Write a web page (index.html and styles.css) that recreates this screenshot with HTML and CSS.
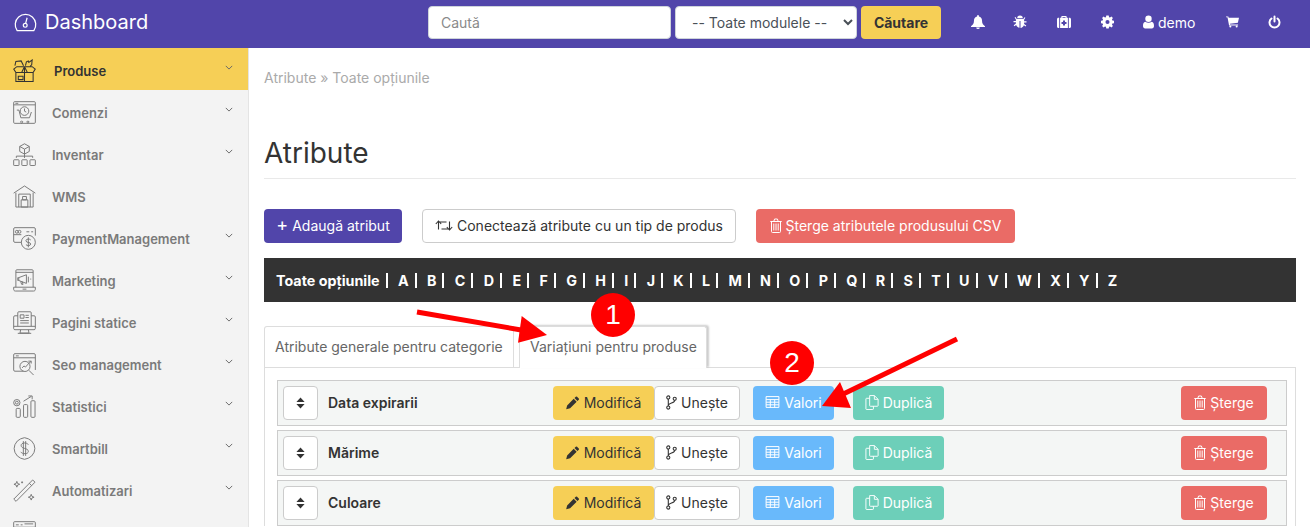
FILE: index.html
```html
<!DOCTYPE html>
<html lang="ro">
<head>
<meta charset="utf-8">
<title>Atribute</title>
<link rel="stylesheet" href="styles.css">
</head>
<body>
<svg class="defs" width="0" height="0" aria-hidden="true">
  <defs>
    <symbol id="chev" viewBox="0 0 10 6"><path d="M1 1l4 4 4-4" fill="none" stroke="currentColor" stroke-width="1.200"/></symbol>
    <symbol id="sort" viewBox="0 0 10 14"><path d="M5 .5L9.800 5.800H.2zM5 13.500L.2 8.200h9.600z" fill="currentColor"/></symbol>
    <symbol id="pencil" viewBox="0 0 16 16"><path d="M11.200 1.400a1 1 0 0 1 1.400 0l2 2a1 1 0 0 1 0 1.400l-1.500 1.500-3.400-3.400zM8.800 3.800l3.400 3.400-7.500 7.500-4.500 1 1.100-4.400z" fill="currentColor"/></symbol>
    <symbol id="fork" viewBox="0 0 12 16"><g fill="none" stroke="currentColor" stroke-width="1.200"><circle cx="2.500" cy="2.500" r="1.700"/><circle cx="2.500" cy="13.500" r="1.700"/><circle cx="9.500" cy="4" r="1.700"/><path d="M2.500 4.200v7.600M9.500 5.700c0 3-7 2.600-7 5.600"/></g></symbol>
    <symbol id="table" viewBox="0 0 14 12"><path d="M.6.6h12.800v10.800H.6zM.6 3.600h12.800M.6 6.200h12.800M.6 8.800h12.800M4.800 3.600v7.800M9.200 3.600v7.800" fill="none" stroke="currentColor" stroke-width="1"/></symbol>
    <symbol id="copy" viewBox="0 0 14 16"><path d="M4.500 3.500H1.200a.7.7 0 0 0-.7.700v10.600c0 .4.300.7.700.7h6.600c.4 0 .7-.3.7-.7V12M4.500.6h5l4 4v6.700c0 .4-.3.7-.7.7H5.200a.7.7 0 0 1-.7-.7zM9.500.6v4h4" fill="none" stroke="currentColor" stroke-width="1"/></symbol>
    <symbol id="trash" viewBox="0 0 12 15"><path d="M1.500 3.500v10a1 1 0 0 0 1 1h7a1 1 0 0 0 1-1v-10M.3 3.500h11.400M3.800 3.300l.8-2.300h2.800l.8 2.300M3.800 5.500v7M6 5.500v7M8.200 5.500v7" fill="none" stroke="currentColor" stroke-width="1"/></symbol>
    <symbol id="retweet" viewBox="0 0 18 12"><path d="M3.500 10V2.500h8M.8 4.500l2.700-3 2.700 3M14.500 2v7.500h-8M17.200 7.500l-2.700 3-2.700-3" fill="none" stroke="currentColor" stroke-width="1.100"/></symbol>
    <symbol id="bell" viewBox="0 0 14 14"><path d="M7 0c.6 0 .9.400.9 1v.5c2 .5 3.100 2 3.100 4 0 3.400 1.500 4.400 3 5.800v.7H0v-.7c1.500-1.400 3-2.400 3-5.800 0-2 1.100-3.500 3.100-4V1c0-.6.300-1 .9-1zM5.200 12.500h3.600A1.800 1.500 0 0 1 7 14a1.800 1.500 0 0 1-1.800-1.500z" fill="currentColor"/></symbol>
    <symbol id="bug" viewBox="0 0 14 14"><path d="M4.200 3.200a2.800 2.800 0 0 1 5.600 0zM3.700 4h6.600l1.200-1.800.9.600-1.300 2v1.500h2.400v1.300h-2.400v1.300l2.200 1.700-.7 1-1.700-1.300c-.5 1.400-1.800 2.500-3.400 2.700V6H6.500v6.700c-1.600-.2-2.900-1.300-3.400-2.700l-1.700 1.300-.7-1 2.200-1.700V7.300H.5V6h2.400V4.500l-1.300-2 .9-.6z" fill="currentColor"/></symbol>
    <symbol id="medkit" viewBox="0 0 14 12"><path fill-rule="evenodd" d="M4.300 1.800V1c0-.6.400-1 1-1h3.400c.6 0 1 .4 1 1v.8h1.200v10.200H3.100V1.800zm1.200 0h3V1h-3zM6 4.500h2V6h1.500v2H8v1.500H6V8H4.500V6H6zM0 3.300c0-.8.600-1.500 1.500-1.500h.7V12h-.7C.6 12 0 11.300 0 10.500zM11.800 1.800h.7c.9 0 1.500.7 1.500 1.500v7.200c0 .8-.6 1.500-1.500 1.500h-.7z" fill="currentColor"/></symbol>
    <symbol id="cog" viewBox="0 0 14 14"><path fill-rule="evenodd" d="M5.700 0h2.600l.4 1.800 1 .4L11.300 1.200l1.500 1.500-1 1.600.4 1 1.800.4v2.600l-1.800.4-.4 1 1 1.600-1.500 1.500-1.600-1-1 .4-.4 1.800H5.700l-.4-1.800-1-.4-1.600 1-1.500-1.500 1-1.600-.4-1L0 8.300V5.700l1.800-.4.4-1-1-1.600 1.500-1.500 1.600 1 1-.4zM7 4.800a2.200 2.200 0 1 0 0 4.400 2.200 2.200 0 0 0 0-4.400z" fill="currentColor"/></symbol>
    <symbol id="user" viewBox="0 0 11 13"><circle cx="5.500" cy="3.200" r="3.200" fill="currentColor"/><path d="M2.300 6.300c.9.700 2 1 3.200 1s2.300-.3 3.200-1c1.500.2 2.300 1.800 2.300 4.300 0 1.500-.9 2.400-2.200 2.400H2.200C.9 13 0 12.100 0 10.600c0-2.500.8-4.100 2.300-4.300z" fill="currentColor"/></symbol>
    <symbol id="cart" viewBox="0 0 14 12"><path d="M0 0h2.500l.4 1.500H14l-1.200 5.300-8.600 1 .2.900h8.600v1H3.300L1.600 1H0z" fill="currentColor"/><circle cx="4.700" cy="10.900" r="1.100" fill="currentColor"/><circle cx="11.500" cy="10.900" r="1.100" fill="currentColor"/></symbol>
    <symbol id="power" viewBox="0 0 13 13"><path d="M3.500 3a5 5 0 1 0 6 0M6.500 1v5" fill="none" stroke="currentColor" stroke-width="2" stroke-linecap="round"/></symbol>
    <symbol id="gauge" viewBox="0 0 24 20"><path d="M3.200 18.500a10.800 10.800 0 1 1 17.600 0zM12 11.500l1.700-6.500" fill="none" stroke="currentColor" stroke-width="1.300" stroke-linejoin="round"/><circle cx="11.700" cy="13" r="2" fill="none" stroke="currentColor" stroke-width="1.300"/></symbol>
    <symbol id="i-box" viewBox="0 0 24 24"><g fill="none" stroke="currentColor" stroke-width="1.100"><path d="M3 14h18v9.500H3zM3 14L.8 10.500 4 8h16l3.200 2.500L21 14M12 8v15.500M12 8l-3 6M12 8l3 6M5.500 18h5v3.500h-5zM2 7l1-4.500 5.500-.5L11 7M13 7l1-4 2-1 .5 1.500 3.500-2.500-.5 5-1.500 1.500"/></g></symbol>
    <symbol id="i-cart" viewBox="0 0 24 24"><g fill="none" stroke="currentColor" stroke-width="1"><rect x=".7" y=".7" width="22.600" height="22.600" rx="1"/><path d="M.7 4h22.600M2.500 2.400h3"/><circle cx="12" cy="10.500" r="4.500"/><path d="M12 7.800v2.800l1.800 1M4 9.500h2.200l2 8h9l2-6M9 21a1 1 0 1 0 .1 0M15.500 21a1 1 0 1 0 .1 0"/></g></symbol>
    <symbol id="i-net" viewBox="0 0 24 24"><g fill="none" stroke="currentColor" stroke-width="1"><path d="M12 .8l5 2.800v5.200l-5 2.800-5-2.800V3.600zM7 3.600l5 2.800 5-2.800M12 6.400v5.200M12 11.600v4M3.500 15.500v-1.800h17v1.800"/><rect x=".7" y="17.500" width="5.600" height="6" rx=".6"/><rect x="9.200" y="17.500" width="5.600" height="6" rx=".6"/><rect x="17.700" y="17.500" width="5.600" height="6" rx=".6"/></g></symbol>
    <symbol id="i-wh" viewBox="0 0 24 24"><g fill="none" stroke="currentColor" stroke-width="1"><path d="M.7 8.500L12 1l11.300 7.500M3 8v15h18V8M6 23V9.500h12V23M8.500 15.500h7V23h-7zM10 12h4v3.500h-4z"/></g></symbol>
    <symbol id="i-pay" viewBox="0 0 24 24"><g fill="none" stroke="currentColor" stroke-width="1"><path d="M9 16H2a1.300 1.300 0 0 1-1.300-1.300V2A1.300 1.300 0 0 1 2 .7h20A1.300 1.300 0 0 1 23.300 2v7M.7 8h8M14 5h3M19 5h2"/><circle cx="4" cy="5" r="1.500"/><circle cx="6.800" cy="5" r="1.500"/><circle cx="16" cy="16" r="7.300"/><path d="M18.500 13.500c-1-1.300-5-1.300-5 .8 0 2.700 5 1 5 3.500 0 2-4 2-5 .6M16 10.800v10.400"/></g></symbol>
    <symbol id="i-mkt" viewBox="0 0 24 24"><g fill="none" stroke="currentColor" stroke-width="1"><path d="M3 19V1.800A1 1 0 0 1 4 .8h16a1 1 0 0 1 1 1V19M3 3.500h18M.7 19h22.600v2.200c0 1-.6 1.800-1.800 1.800h-19c-1.200 0-1.800-.8-1.800-1.800zM10 21h4M6 9l8-3v9l-8-3zM6 9H5v3h1M8 13l1 3h1.500l-1-3M16 8v6M18 10.500h1"/></g></symbol>
    <symbol id="i-page" viewBox="0 0 24 24"><g fill="none" stroke="currentColor" stroke-width="1"><path d="M5 16V1.800A1 1 0 0 1 6 .8h12a1 1 0 0 1 1 1V16M5 5H2a1.300 1.300 0 0 0-1.300 1.300v12A1.300 1.300 0 0 0 2 19.500h20a1.300 1.300 0 0 0 1.300-1.300v-12A1.300 1.300 0 0 0 22 5h-3M.7 16h22.600M8 19.500l-.7 3.500h9.400l-.7-3.500M5 23.300h14M7.500 4h4v3.500h-4zM13 4.500h3.500M13 6.800h3.500M7.500 10h9M7.500 12.500h9"/></g></symbol>
    <symbol id="i-seo" viewBox="0 0 24 24"><g fill="none" stroke="currentColor" stroke-width="1"><path d="M11 19H2a1.300 1.300 0 0 1-1.300-1.300V2A1.300 1.300 0 0 1 2 .7h20A1.300 1.300 0 0 1 23.300 2v15.700M.7 5h22.600M3 3h3"/><circle cx="12.500" cy="14" r="5.300"/><path d="M16.500 18l5 5M9.500 15.500l2-2 1.500 1.200 4.500-5 1.500-1M16 8.500h3v2.500"/></g></symbol>
    <symbol id="i-stat" viewBox="0 0 24 24"><g fill="none" stroke="currentColor" stroke-width="1"><circle cx="4" cy="8" r="3.300"/><circle cx="4" cy="8" r="1.500"/><rect x="3.300" y="14" width="4.300" height="9.300" rx="1"/><rect x="11" y="10" width="4.300" height="13.300" rx="1"/><rect x="18.700" y="6" width="4.300" height="17.300" rx="1"/><path d="M11 6.500L19 1.500M16 1h4v3.500"/></g></symbol>
    <symbol id="i-bill" viewBox="0 0 24 24"><g fill="none" stroke="currentColor" stroke-width="1"><path d="M12 .7l4 1.200 3.500 2.300 2.500 3.800.8 4-.8 4-2.500 3.800-3.500 2.300-4 1.200-4-1.200-3.500-2.300L2 16l-.8-4 .8-4 2.500-3.800L8 1.900z"/><path d="M16 8c-1.300-2.500-7.500-2.500-7.500.8 0 4 7.500 2.300 7.500 6.200 0 3.300-6.500 3-8 .5M10.800 4.300v15.400M13.200 4.300v15.400"/></g></symbol>
    <symbol id="i-wand" viewBox="0 0 24 24"><g fill="none" stroke="currentColor" stroke-width="1"><path d="M.8 21l19.700-20 2.500 2.300L3.200 23.300zM17 4.500l2.500 2.500M4 2.500l.8 2.200 2.200.8-2.200.8L4 8.500l-.8-2.200L1 5.500l2.200-.8zM19 16l.8 2.200 2.200.8-2.200.8L19 22l-.8-2.200-2.200-.8 2.200-.8zM9.500 2.500v2M8.500 3.500h2"/></g></symbol>
    <symbol id="i-last" viewBox="0 0 24 24"><g fill="none" stroke="currentColor" stroke-width="1"><rect x=".7" y=".7" width="22.600" height="22.600" rx="1"/><path d="M3 4h3M8 4h2M12 3h9M.7 6.500h22.600"/></g></symbol>
  </defs>
</svg>

<header class="topbar">
  <a class="brand"><svg class="brand-icon"><use href="#gauge"/></svg>Dashboard</a>
  <form class="search">
    <input class="search-input" type="text" placeholder="Caută">
    <select class="search-select"><option>-- Toate modulele --</option></select>
    <button class="search-btn" type="button">Căutare</button>
  </form>
  <nav class="top-icons">
    <a class="ti ti-bell"><svg class="w14"><use href="#bell"/></svg></a>
    <a class="ti ti-bug"><svg class="w14"><use href="#bug"/></svg></a>
    <a class="ti ti-med"><svg class="w14"><use href="#medkit"/></svg></a>
    <a class="ti ti-cog"><svg class="w13"><use href="#cog"/></svg></a>
    <a class="ti ti-user"><svg class="w11"><use href="#user"/></svg>demo</a>
    <a class="ti ti-cart"><svg class="w13"><use href="#cart"/></svg></a>
    <a class="ti ti-pow"><svg class="w13"><use href="#power"/></svg></a>
  </nav>
</header>

<div class="layout">
  <aside class="sidebar">
    <a class="side-item active"><svg class="side-icon"><use href="#i-box"/></svg><span class="side-label">Produse</span><svg class="chev"><use href="#chev"/></svg></a>
    <a class="side-item"><svg class="side-icon"><use href="#i-cart"/></svg><span class="side-label">Comenzi</span><svg class="chev"><use href="#chev"/></svg></a>
    <a class="side-item"><svg class="side-icon"><use href="#i-net"/></svg><span class="side-label">Inventar</span><svg class="chev"><use href="#chev"/></svg></a>
    <a class="side-item"><svg class="side-icon"><use href="#i-wh"/></svg><span class="side-label">WMS</span></a>
    <a class="side-item"><svg class="side-icon"><use href="#i-pay"/></svg><span class="side-label">PaymentManagement</span><svg class="chev"><use href="#chev"/></svg></a>
    <a class="side-item"><svg class="side-icon"><use href="#i-mkt"/></svg><span class="side-label">Marketing</span><svg class="chev"><use href="#chev"/></svg></a>
    <a class="side-item"><svg class="side-icon"><use href="#i-page"/></svg><span class="side-label">Pagini statice</span><svg class="chev"><use href="#chev"/></svg></a>
    <a class="side-item"><svg class="side-icon"><use href="#i-seo"/></svg><span class="side-label">Seo management</span><svg class="chev"><use href="#chev"/></svg></a>
    <a class="side-item"><svg class="side-icon"><use href="#i-stat"/></svg><span class="side-label">Statistici</span><svg class="chev"><use href="#chev"/></svg></a>
    <a class="side-item"><svg class="side-icon"><use href="#i-bill"/></svg><span class="side-label">Smartbill</span><svg class="chev"><use href="#chev"/></svg></a>
    <a class="side-item"><svg class="side-icon"><use href="#i-wand"/></svg><span class="side-label">Automatizari</span><svg class="chev"><use href="#chev"/></svg></a>
    <a class="side-item"><svg class="side-icon"><use href="#i-last"/></svg></a>
  </aside>

  <main class="content">
    <div class="breadcrumb">Atribute » Toate opțiunile</div>
    <h1 class="title">Atribute</h1>
    <div class="actions">
      <a class="btn btn-primary"><span class="plus">+</span> Adaugă atribut</a>
      <a class="btn btn-outline"><svg class="ic-retweet"><use href="#retweet"/></svg> Conectează atribute cu un tip de produs</a>
      <a class="btn btn-red"><svg class="ic-trash"><use href="#trash"/></svg> Șterge atributele produsului CSV</a>
    </div>
    <div class="alpha">
      <a class="alpha-first">Toate opțiunile</a><a>A</a><a>B</a><a>C</a><a>D</a><a>E</a><a>F</a><a>G</a><a>H</a><a>I</a><a>J</a><a>K</a><a>L</a><a>M</a><a>N</a><a>O</a><a>P</a><a>Q</a><a>R</a><a>S</a><a>T</a><a>U</a><a>V</a><a>W</a><a>X</a><a>Y</a><a class="alpha-last">Z</a>
    </div>
    <div class="tabs">
      <a class="tab">Atribute generale pentru categorie</a>
      <a class="tab tab-active">Variațiuni pentru produse</a>
    </div>
    <section class="panel">
      <div class="row">
        <button class="sort" type="button"><svg class="ic-sort"><use href="#sort"/></svg></button>
        <strong class="row-name">Data expirarii</strong>
        <a class="btn btn-yellow"><svg class="ic"><use href="#pencil"/></svg> Modifică</a>
        <a class="btn btn-white"><svg class="ic-fork"><use href="#fork"/></svg> Unește</a>
        <a class="btn btn-blue"><svg class="ic-table"><use href="#table"/></svg> Valori</a>
        <a class="btn btn-teal"><svg class="ic"><use href="#copy"/></svg> Duplică</a>
        <a class="btn btn-red btn-del"><svg class="ic-trash"><use href="#trash"/></svg> Șterge</a>
      </div>
      <div class="row">
        <button class="sort" type="button"><svg class="ic-sort"><use href="#sort"/></svg></button>
        <strong class="row-name">Mărime</strong>
        <a class="btn btn-yellow"><svg class="ic"><use href="#pencil"/></svg> Modifică</a>
        <a class="btn btn-white"><svg class="ic-fork"><use href="#fork"/></svg> Unește</a>
        <a class="btn btn-blue"><svg class="ic-table"><use href="#table"/></svg> Valori</a>
        <a class="btn btn-teal"><svg class="ic"><use href="#copy"/></svg> Duplică</a>
        <a class="btn btn-red btn-del"><svg class="ic-trash"><use href="#trash"/></svg> Șterge</a>
      </div>
      <div class="row">
        <button class="sort" type="button"><svg class="ic-sort"><use href="#sort"/></svg></button>
        <strong class="row-name">Culoare</strong>
        <a class="btn btn-yellow"><svg class="ic"><use href="#pencil"/></svg> Modifică</a>
        <a class="btn btn-white"><svg class="ic-fork"><use href="#fork"/></svg> Unește</a>
        <a class="btn btn-blue"><svg class="ic-table"><use href="#table"/></svg> Valori</a>
        <a class="btn btn-teal"><svg class="ic"><use href="#copy"/></svg> Duplică</a>
        <a class="btn btn-red btn-del"><svg class="ic-trash"><use href="#trash"/></svg> Șterge</a>
      </div>
    </section>
  </main>
</div>

<svg class="annot" viewBox="0 0 1310 527" aria-hidden="true">
  <path d="M417 312L524 330.500" stroke="#f00" stroke-width="5" fill="none"/>
  <path d="M547 335L521.700 316 518 342.700z" fill="#f00"/>
  <path d="M957 339L835 398" stroke="#f00" stroke-width="5" fill="none"/>
  <path d="M822 406L840 382 851 408z" fill="#f00"/>
</svg>
<div class="badge badge-1">1</div>
<div class="badge badge-2">2</div>
</body>
</html>
```
FILE: styles.css
```css
* { box-sizing: border-box; }
html, body { margin: 0; height: 527px; overflow: hidden; }
body { font-family: Inter, "Liberation Sans", sans-serif; font-size: 14px; color: #333; background: #fff; position: relative; }
.defs { position: absolute; }
a { text-decoration: none; color: inherit; }

.topbar { height: 48px; background: #5145aa; display: flex; align-items: flex-start; color: #fff; }
.brand { width: 428px; height: 44px; display: flex; align-items: center; padding-left: 14px; font-size: 20px; line-height: 1; }
.brand-icon { width: 23px; height: 19px; margin-right: 8px; color: #fff; }
.search { display: flex; gap: 4px; padding-top: 6px; }
.search-input { width: 243px; height: 33px; border: 1px solid #ced4da; border-radius: 4px; padding: 0 12px; font: 14px Inter, sans-serif; background: #fff; }
.search-input::placeholder { color: #8a8a8a; }
.search-select { width: 182px; height: 33px; border: 1px solid #ced4da; border-radius: 4px; padding: 0 12px; font: 14px Inter, sans-serif; font-variant-ligatures: none; color: #495057; background: #fff; }
.search-btn { width: 80px; height: 33px; border: 0; border-radius: 4px; background: #f6cf56; color: #333; font: 700 14px Inter, sans-serif; padding: 0; }
.top-icons { display: flex; align-items: center; height: 44px; color: #fff; font: 14px Inter, sans-serif; margin-left: 30px; }
.ti { display: flex; align-items: center; gap: 4px; }
.ti svg { height: 14px; }
.w14 { width: 14px; }
.w13 { width: 13px; }
.w11 { width: 11px; }
.ti-bug { margin-left: 28px; }
.ti-med { margin-left: 30px; }
.ti-cog { margin-left: 30px; }
.ti-user { margin-left: 29px; }
.ti-cart { margin-left: 31px; }
.ti-pow { margin-left: 29px; }

.layout { display: flex; height: 479px; overflow: hidden; }
.sidebar { width: 249px; flex: none; background: #f3f3f3; border-right: 1px solid #e4e4e4; }
.side-item { height: 42px; display: flex; align-items: center; padding-left: 13px; color: #7a7a7a; font-weight: 600; font-size: 13px; position: relative; }
.side-item.active { background: #f6cf56; color: #333; }
.side-label { padding-top: 4px; }
.side-icon { width: 23px; height: 23px; flex: none; margin: 2px 16px 0 0; color: #777; }
.active .side-icon { color: #333; margin-right: 18px; }
.chev { width: 8px; height: 5px; position: absolute; right: 15px; top: 17px; color: #666; }

.content { flex: 1; padding: 0 14px 0 15px; min-width: 0; }
.breadcrumb { color: #aaa; font-size: 14px; line-height: 20px; padding-top: 20px; height: 40px; }
.title { font-size: 28px; font-weight: 400; line-height: 34px; color: #333; margin: 48px 0 0; padding-bottom: 8px; border-bottom: 1px solid #e9e9e9; height: 43px; }
.actions { display: flex; gap: 20px; margin-top: 30px; }
.btn { display: inline-flex; align-items: center; justify-content: center; gap: 4px; height: 34px; padding-bottom: 2px; border-radius: 4px; font: 14px Inter, sans-serif; border: 1px solid transparent; }
.btn-primary { width: 138px; background: #5145aa; color: #fff; }
.plus { font-size: 18px; line-height: 1; }
.btn-outline { width: 314px; background: #fff; border-color: #ccc; color: #333; }
.btn-red { background: #ea6b66; color: #fff; }
.actions .btn-red { width: 259px; }
.ic-retweet { width: 18px; height: 13px; }
.ic-trash { width: 12px; height: 15px; }
.ic { width: 14px; height: 15px; }
.ic-fork { width: 11px; height: 15px; }
.ic-table { width: 15px; height: 12px; }
.ic-sort { width: 9px; height: 12px; }

.alpha { height: 44px; background: #333; color: #fff; margin-top: 15px; display: flex; align-items: center; padding-left: 12px; font-weight: 700; font-size: 14.300px; }
.alpha a { padding: 0 6px 0 10.350px; border-right: 2px solid #fff; line-height: 15px; }
.alpha a.alpha-first { padding-left: 0; padding-right: 6px; }
.alpha a.alpha-last { border-right: 0; }

.tabs { display: flex; margin-top: 24px; height: 41px; align-items: flex-end; gap: 5px; }
.tab { height: 41px; display: flex; align-items: center; padding: 0 0 2px 10px; border: 1px solid #ddd; border-bottom: 0; color: #666; font: 14px Inter, sans-serif; width: 250px; border-radius: 3px 0 0 0; }
.tab-active { width: 188px; background: #fff; border-radius: 3px 3px 0 0; box-shadow: 2px -1px 2px rgba(0,0,0,.2); position: relative; margin-bottom: -1px; height: 42px; padding-bottom: 3px; }
.panel { border: 1px solid #ddd; border-bottom: 0; padding: 12px 8px 0 12px; display: flex; flex-direction: column; gap: 4px; }
.row { height: 46px; flex: none; background: #f4f6f5; border: 1px solid #ccc; display: flex; align-items: center; padding: 0 19px 0 5px; }
.sort { width: 35px; height: 34px; flex: none; background: #fff; border: 1px solid #ccc; border-radius: 4px; padding: 0; display: flex; align-items: center; justify-content: center; color: #333; margin-right: 10px; }
.row-name { width: 225px; font-size: 14px; font-weight: 600; color: #333; padding-bottom: 2px; }
.btn-yellow { width: 101px; background: #f6cf56; color: #333; }
.btn-white { width: 86px; background: #fff; border-color: #ccc; color: #333; }
.btn-blue { width: 81px; background: #69b9fb; color: #fff; margin-left: 13px; }
.btn-teal { width: 91px; background: #6dcfb9; color: #fff; margin-left: 19px; }
.btn-del { width: 86px; margin-left: auto; }

.annot { position: absolute; left: 0; top: 0; width: 1310px; height: 527px; pointer-events: none; z-index: 5; }
.badge { position: absolute; width: 44px; height: 44px; border-radius: 50%; background: #f00; color: #fff; font: 28px/44px "Liberation Sans", sans-serif; text-align: center; z-index: 6; }
.badge-1 { left: 591px; top: 293px; }
.badge-2 { left: 770px; top: 341px; }
```
